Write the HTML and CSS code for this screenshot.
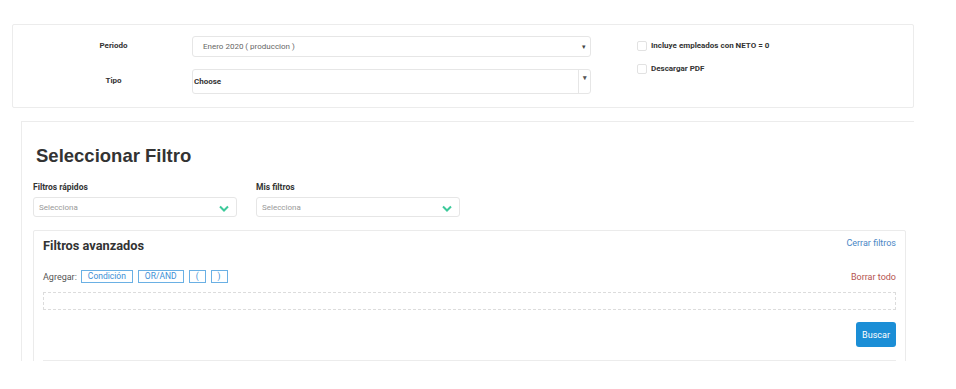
FILE: index.html
```html
<!DOCTYPE html>
<html lang="es">
  <head>
    <meta charset="UTF-8" />
    <meta name="viewport" content="width=device-width, initial-scale=1.0" />
    <title>Seleccionar Filtro</title>
    <link rel="stylesheet" href="styles.css">
  </head>
  <body>
    <div class="page">
      <div class="card top-card">
        <div class="top-form">
          <label class="row-label">Periodo</label>
          <div class="select select-period">
            <span>Enero 2020 ( produccion )</span>
            <span class="caret">&#9662;</span>
          </div>
          <div class="checks">
            <label class="check"><span class="box"></span>Incluye empleados con NETO = 0</label>
            <label class="check"><span class="box"></span>Descargar PDF</label>
          </div>
          <label class="row-label">Tipo</label>
          <div class="select select-tipo">
            <span>Choose</span>
            <span class="caret-box">&#9662;</span>
          </div>
        </div>
      </div>

      <div class="card filter-card">
        <h2 class="filter-title">Seleccionar Filtro</h2>
        <div class="quick-row">
          <div class="quick-group">
            <label class="quick-label">Filtros rápidos</label>
            <div class="select select-quick">
              <span>Selecciona</span>
              <svg class="chevron" width="10" height="7" viewBox="0 0 10 7"><path d="M1 1.5 L5 5.5 L9 1.5" fill="none" stroke="#3cc99a" stroke-width="2"/></svg>
            </div>
          </div>
          <div class="quick-group">
            <label class="quick-label">Mis filtros</label>
            <div class="select select-quick">
              <span>Selecciona</span>
              <svg class="chevron" width="10" height="7" viewBox="0 0 10 7"><path d="M1 1.5 L5 5.5 L9 1.5" fill="none" stroke="#3cc99a" stroke-width="2"/></svg>
            </div>
          </div>
        </div>

        <div class="adv-card">
          <div class="adv-head">
            <h3 class="adv-title">Filtros avanzados</h3>
            <a class="link-close" href="#">Cerrar filtros</a>
          </div>
          <div class="adv-tools">
            <div class="add-group">
              <span class="add-label">Agregar:</span>
              <button class="btn-outline">Condición</button>
              <button class="btn-outline">OR/AND</button>
              <button class="btn-outline">(</button>
              <button class="btn-outline">)</button>
            </div>
            <a class="link-clear" href="#">Borrar todo</a>
          </div>
          <div class="drop-zone"></div>
          <div class="adv-actions">
            <button class="btn-search">Buscar</button>
          </div>
          <div class="results"></div>
        </div>
      </div>
    </div>
  </body>
</html>
```

FILE: styles.css
```css
body {
  margin: 0;
  font-family: Roboto, "Liberation Sans", Arial, sans-serif;
  font-size: 8px;
  color: #333;
  background: #fff;
}
.page {
  height: 361px;
  overflow: hidden;
  padding: 24px 0 0 12px;
  box-sizing: border-box;
}
.card {
  background: #fff;
  box-sizing: border-box;
}
.top-card {
  width: 902px;
  height: 84px;
  border: 1px solid #ececec;
  border-radius: 2px;
  padding: 11px 0 0 0;
}
.top-form {
  display: grid;
  grid-template-columns: 179px 399px 1fr;
  grid-template-rows: 21px 25px;
  row-gap: 12px;
}
.row-label {
  font-weight: bold;
  text-align: center;
  padding-left: 22px;
  align-self: center;
  margin-top: -2px;
}
.select {
  display: flex;
  align-items: center;
  justify-content: space-between;
  border: 1px solid #e6e6e6;
  border-radius: 3px;
  box-sizing: border-box;
  background: #fff;
}
.select-period {
  padding: 0 4px 0 10px;
  color: #666;
}
.caret {
  font-size: 7px;
  color: #444;
}
.select-tipo {
  padding-left: 1px;
  font-weight: bold;
  color: #333;
}
.caret-box {
  height: 100%;
  width: 12px;
  border-left: 1px solid #e6e6e6;
  display: flex;
  justify-content: center;
  padding-top: 4px;
  box-sizing: border-box;
  font-size: 7px;
  color: #555;
}
.checks {
  grid-row: 1 / 3;
  grid-column: 3;
  padding: 4px 0 0 46px;
  display: flex;
  flex-direction: column;
  gap: 12px;
}
.check {
  display: flex;
  align-items: center;
  gap: 4px;
  font-weight: bold;
  line-height: 11px;
}
.box {
  width: 10px;
  height: 10px;
  border: 1px solid #e2e2e2;
  border-radius: 2px;
  box-sizing: border-box;
}
.filter-card {
  margin: 13px 0 0 9px;
  width: 893px;
  height: 260px;
  border-top: 1px solid #ececec;
  border-left: 1px solid #ececec;
  padding: 0 8px 0 11px;
}
.filter-title {
  font-family: "Liberation Sans", Arial, sans-serif;
  font-size: 18.5px;
  line-height: 22px;
  font-weight: bold;
  color: #333;
  margin: 23px 0 0 3px;
}
.quick-row {
  display: flex;
  gap: 19px;
  margin-top: 14px;
}
.quick-group {
  width: 204px;
}
.quick-label {
  display: block;
  font-weight: bold;
  font-size: 8.5px;
  line-height: 12px;
  margin-bottom: 4px;
}
.select-quick {
  height: 20px;
  padding: 0 7px 0 5px;
  color: #999;
}
.chevron {
  margin-top: 2px;
}
.adv-card {
  margin-top: 13px;
  border: 1px solid #ebebeb;
  border-radius: 2px;
  padding: 7px 9px 0 9px;
  height: 200px;
  font-size: 9px;
}
.adv-head {
  display: flex;
  justify-content: space-between;
  align-items: flex-start;
}
.adv-title {
  margin: 0;
  font-size: 12.8px;
  line-height: 16px;
  font-weight: bold;
  color: #333;
}
.link-close {
  color: #4a86c5;
  text-decoration: none;
  line-height: 10px;
}
.adv-tools {
  display: flex;
  justify-content: space-between;
  align-items: center;
  margin-top: 16px;
  height: 13px;
}
.add-group {
  display: flex;
  align-items: center;
  gap: 5px;
}
.add-label {
  color: #555;
  margin-right: -1px;
}
.btn-outline {
  font-family: Roboto, "Liberation Sans", Arial, sans-serif;
  font-size: 8.5px;
  height: 13px;
  line-height: 11px;
  padding: 0 6px;
  border: 1px solid #6ab0e4;
  background: #fff;
  color: #3d8fd6;
  border-radius: 0;
}
.link-clear {
  color: #b5544f;
  text-decoration: none;
}
.drop-zone {
  margin-top: 9px;
  height: 18px;
  border: 1px dashed #dcdcdc;
  box-sizing: border-box;
}
.adv-actions {
  display: flex;
  justify-content: flex-end;
  margin-top: 12px;
}
.btn-search {
  font-family: Roboto, "Liberation Sans", Arial, sans-serif;
  font-size: 9px;
  width: 40px;
  height: 25px;
  border: none;
  border-radius: 3px;
  background: #1b8ed6;
  color: #fff;
  cursor: pointer;
}
.results {
  margin-top: 13px;
  border-top: 1px solid #ececec;
}
```
